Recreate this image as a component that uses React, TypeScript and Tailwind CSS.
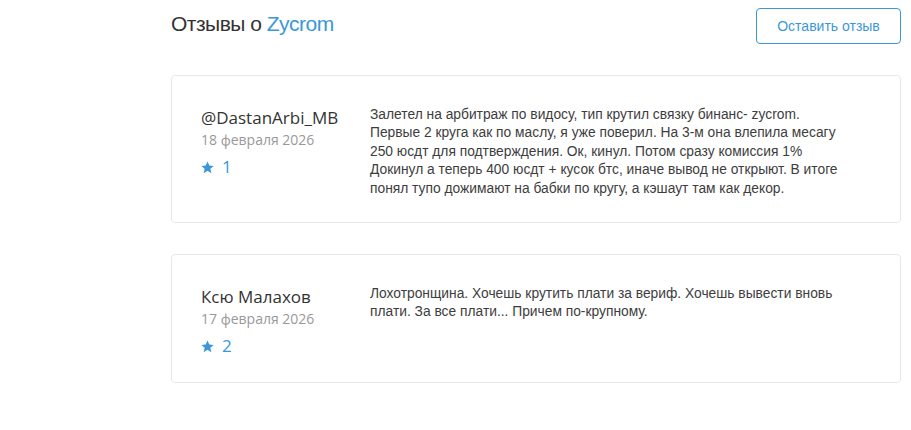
import React from "react";

const reviews = [
  {
    name: "@DastanArbi_MB",
    date: "18 февраля 2026",
    rating: 1,
    text: [
      "Залетел на арбитраж по видосу, тип крутил связку бинанс- zycrom. Первые 2 круга как по маслу, я уже поверил. На 3-м она влепила месагу 250 юсдт для подтверждения. Ок, кинул. Потом сразу комиссия 1%",
      "Докинул а теперь 400 юсдт + кусок бтс, иначе вывод не открыют. В итоге понял тупо дожимают на бабки по кругу, а кэшаут там как декор.",
    ],
  },
  {
    name: "Ксю Малахов",
    date: "17 февраля 2026",
    rating: 2,
    text: [
      "Лохотронщина. Хочешь крутить плати за вериф. Хочешь вывести вновь плати. За все плати... Причем по-крупному.",
    ],
  },
];

function Star() {
  return (
    <svg width="13" height="13" viewBox="0 0 24 24" className="shrink-0">
      <path
        fill="#3a97d8"
        d="M12 0.8l3.3 7.4 8.1.8-6.1 5.4 1.8 8-7.1-4.2-7.1 4.2 1.8-8L0.6 9l8.1-.8z"
      />
    </svg>
  );
}

export default function App() {
  return (
    <div className="min-h-[430px] w-full bg-white">
      <div className="ml-[171px] w-[730px] pt-2">
        <div className="flex items-start justify-between">
          <h2 className="mt-[1px] text-[21px] leading-[30px] tracking-[-0.5px] text-[#333] [font-family:'Liberation_Sans',Arial,sans-serif]">
            Отзывы о <span className="text-[#3a97d8]">Zycrom</span>
          </h2>
          <button className="flex h-[36px] w-[145px] items-center justify-center rounded-[4px] border border-[#3a97d8] text-[14px] text-[#3a97d8] [font-family:'Liberation_Sans',Arial,sans-serif]">
            Оставить отзыв
          </button>
        </div>
        <div className="mt-[31px] flex flex-col gap-[31px]">
          {reviews.map((r) => (
            <div
              key={r.name}
              className="flex items-start rounded-[4px] border border-[#e8e8e8] pl-[29px] pr-[29px] pt-[29px] pb-[24px]"
            >
              <div className="w-[169px] shrink-0 [font-family:'Open_Sans',sans-serif]">
                <div className="text-[17px] leading-[26px] text-[#333]">{r.name}</div>
                <div className="text-[14px] leading-[18px] text-[#999]">{r.date}</div>
                <div className="mt-[6px] flex items-center gap-[8px]">
                  <Star />
                  <span className="text-[17px] leading-[24px] text-[#3a97d8]">{r.rating}</span>
                </div>
              </div>
              <div className="w-[480px] pt-[1px] text-[13.8px] leading-[18.4px] text-[#3d3d3d] [font-family:'Liberation_Sans',Arial,sans-serif]">
                {r.text.map((t, i) => (
                  <p key={i}>{t}</p>
                ))}
              </div>
            </div>
          ))}
        </div>
      </div>
    </div>
  );
}
